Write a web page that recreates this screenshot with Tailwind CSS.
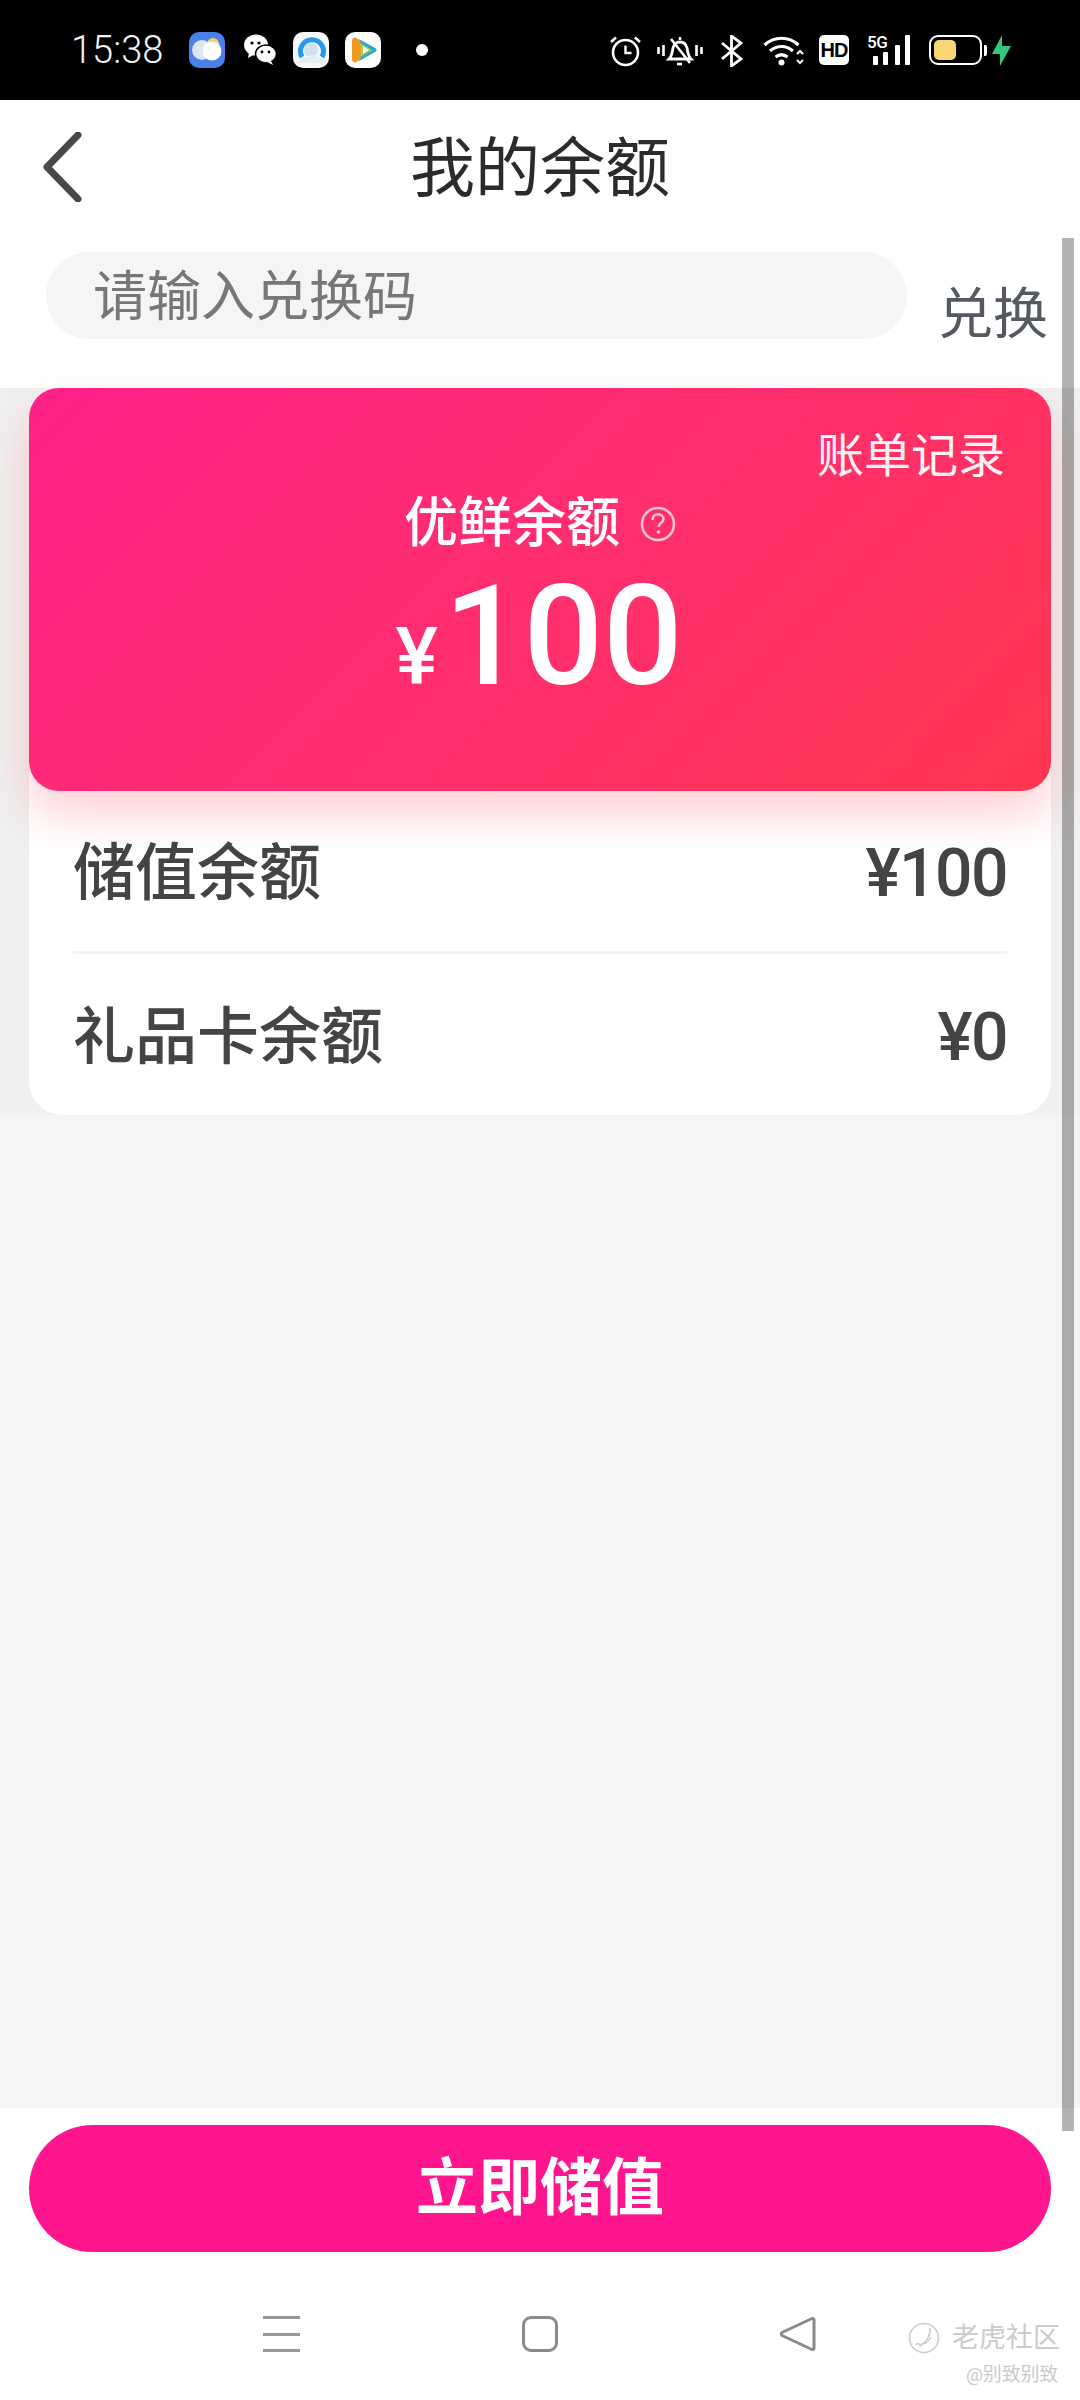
<!DOCTYPE html>
<html lang="zh">
<head>
<meta charset="utf-8">
<script src="https://cdn.jsdelivr.net/npm/@tailwindcss/browser@4"></script>
</head>
<body class="bg-white">
<div class="relative w-[1080px] h-[2400px] overflow-hidden flex flex-col bg-white font-['Roboto','Noto_Sans_CJK_SC',sans-serif]">

  <!-- status bar -->
  <div class="h-[100px] shrink-0 bg-black flex items-center text-white relative">
    <span class="ml-[71px] w-[112px] text-[38px] font-light leading-none text-[#f4f4f4]">15:38</span>
    <svg class="w-[36px] h-[36px] ml-[6px]" viewBox="0 0 36 36"><rect width="36" height="36" rx="10" fill="#4a80e8"/><circle cx="13" cy="18" r="10" fill="#dbe6f8"/><circle cx="24" cy="12" r="6" fill="#f4d468"/><circle cx="23" cy="19" r="9.500" fill="#fff"/></svg>
    <svg class="w-[34px] h-[32px] ml-[18px]" viewBox="0 0 34 32"><ellipse cx="13" cy="11" rx="12" ry="10.500" fill="#fff"/><path d="M6 18l-1 6 7-4z" fill="#fff"/><ellipse cx="23" cy="20" rx="10.500" ry="9" fill="#fff" stroke="#000" stroke-width="1.500"/><path d="M28 27l2 4-6-3z" fill="#fff"/><circle cx="9" cy="9" r="1.600"/><circle cx="16" cy="9" r="1.600"/><circle cx="19" cy="18" r="1.400"/><circle cx="26" cy="18" r="1.400"/></svg>
    <svg class="w-[36px] h-[36px] ml-[16px]" viewBox="0 0 36 36"><rect width="36" height="36" rx="10" fill="#f4f8fc"/><path d="M9 25a11.500 11.500 0 1 1 20 0" fill="none" stroke="#2a98ec" stroke-width="5"/><circle cx="18" cy="18" r="7" fill="#cfe0ee"/><path d="M4 31c3-7 8-6 11-6 3-4 9-3 10 1 3-1 7 0 8 5z" fill="#e4eef6"/></svg>
    <svg class="w-[36px] h-[36px] ml-[16px]" viewBox="0 0 36 36"><rect width="36" height="36" rx="10" fill="#fff"/><path d="M11 6l19 10c2 1 2 3 0 4L11 30c-2 1-4 0-4-3V9c0-3 2-4 4-3z" fill="#f09a22"/><path d="M14 7l16 9c2 1 2 3 0 4l-16 9c4-7 4-15 0-22z" fill="#33a6d8"/><path d="M15 11l12 7-12 7c1.500-4 1.500-10 0-14z" fill="#9bd84a"/><path d="M18 14l6 4-6 4z" fill="#fff"/></svg>
    <span class="ml-[35px] w-[12px] h-[12px] rounded-full bg-white"></span>

    <div class="absolute left-[610px] top-[35px] flex items-start">
      <svg class="w-[31px] h-[32px]" viewBox="0 0 31 32" fill="none" stroke="#fff" stroke-width="2.600"><circle cx="15.500" cy="17.500" r="12.500"/><path d="M15.500 10.500v7.500h6" stroke-width="2.400"/><path d="M1 7l5-4.500M30 7l-5-4.500"/></svg>
      <svg class="w-[46px] h-[32px] ml-[16px]" viewBox="0 0 46 32" fill="none" stroke="#fff"><path d="M1.500 12v7M6.500 10v11M39.500 10v11M44.500 12v7" stroke-width="2.600"/><path d="M12 24c3-3 3-6 4-11 1-4 4-6 7-6s6 2 7 6c1 5 1 8 4 11z" stroke-width="2.800"/><path d="M14 4l19 24" stroke-width="2.600"/><path d="M20 29h5" stroke-width="2.600"/><path d="M23 2v3" stroke-width="2.600"/></svg>
      <svg class="w-[24px] h-[32px] ml-[17px]" viewBox="0 0 24 32" fill="none" stroke="#fff" stroke-width="2.800"><path d="M2 8l19 16-9.500 7V1l9.500 7L2 24"/></svg>
      <svg class="w-[41px] h-[32px] ml-[19px]" viewBox="0 0 41 32" fill="none" stroke="#fff" stroke-width="3.200"><path d="M1.500 10c10-9 24-9 34 0"/><path d="M7 16c7-6 16-6 23 0"/><path d="M12.500 22c4-3 8-3 12 0"/><circle cx="18.500" cy="27.500" r="3" fill="#fff" stroke="none"/><path d="M34 19l3-3 3 3M34 25l3 3 3-3" stroke-width="2"/></svg>
      <div class="w-[30px] h-[30px] ml-[15px] bg-white rounded-[5px] flex items-center justify-center text-black font-['Liberation_Sans',sans-serif] font-bold text-[20px] leading-none tracking-[-1px]">HD</div>
      <div class="relative w-[44px] h-[32px] ml-[18px]">
        <span class="absolute left-0 top-[-1px] text-[17px] leading-[17px] tracking-[-0.5px] font-medium text-white">5G</span>
        <span class="absolute left-[6px] bottom-[2px] w-[5px] h-[9px] rounded-[1px] bg-white"></span>
        <span class="absolute left-[16px] bottom-[2px] w-[5px] h-[13px] rounded-[1px] bg-white"></span>
        <span class="absolute left-[28px] bottom-[2px] w-[5px] h-[20px] rounded-[1px] bg-white"></span>
        <span class="absolute left-[38px] bottom-[2px] w-[5px] h-[30px] rounded-[1px] bg-white"></span>
      </div>
      <div class="w-[53px] h-[30px] ml-[18px] rounded-[9px] border-[2.5px] border-white p-[3px]">
        <div class="w-[22px] h-full rounded-[5px] bg-[#fbd774]"></div>
      </div>
      <span class="w-[3px] h-[11px] mt-[10px] ml-[2px] rounded-r-[2px] bg-white"></span>
      <svg class="w-[20px] h-[31px] ml-[5px]" viewBox="0 0 20 31"><path d="M10 0v11h9L8 31V19H0z" fill="#34c57f"/></svg>
    </div>
  </div>

  <!-- header -->
  <div class="h-[134px] shrink-0 relative flex items-center justify-center">
    <svg class="absolute left-[42px] top-[32px] w-[40px] h-[70px]" viewBox="0 0 40 70" fill="none"><path d="M36 3L5 35l31 32" stroke="#484848" stroke-width="7" stroke-linecap="round" stroke-linejoin="round"/></svg>
    <h1 class="text-[65px] leading-none font-normal text-[#2b2b2b] mt-[4px]">我的余额</h1>
  </div>

  <!-- redeem row -->
  <div class="h-[154px] shrink-0 relative pl-[46px] pt-[18px] flex items-start">
    <div class="w-[861px] h-[87px] rounded-full bg-[#f5f5f5] pl-[47px] flex items-center text-[54px] leading-none text-[#777]"><span class="mt-[4px]">请输入兑换码</span></div>
    <span class="ml-[31px] mt-[35px] text-[55px] leading-none text-[#555a60]">兑换</span>
  </div>

  <!-- balances band -->
  <div class="shrink-0 bg-[#f0f0f0] px-[29px]">
    <div class="bg-white rounded-[34px] w-[1022px]">
      <div class="relative h-[403px] rounded-[30px] bg-linear-135 from-[#ff2088] to-[#ff3650] shadow-[0_24px_46px_rgba(255,60,80,0.24)] text-white flex flex-col items-center">
        <span class="absolute right-[46px] top-[44px] text-[47px] leading-[48px] text-[#fff3f5]">账单记录</span>
        <div class="flex items-center mt-[108px] ml-[0px]">
          <span class="text-[54px] leading-[56px] font-medium">优鲜余额</span>
          <svg class="w-[36px] h-[36px] ml-[20px]" viewBox="0 0 36 36" fill="none"><circle cx="18" cy="18" r="16" stroke="#ffc6d6" stroke-width="2.500"/><path d="M12.500 14c0-8 11-7 11-1 0 4-5 4-5 8" stroke="#ffc6d6" stroke-width="2.500"/><circle cx="18.500" cy="26" r="1.800" fill="#ffc6d6"/></svg>
        </div>
        <div class="flex items-baseline mt-[32px] ml-[-2px] font-medium">
          <span class="text-[80px] leading-[80px] mr-[6px]">¥</span>
          <span class="text-[140px] leading-[104px]">100</span>
        </div>
      </div>
      <div class="px-[44px]">
        <div class="h-[163px] flex items-center justify-between border-b-[3px] border-[#f3f3f3] text-[#444] pt-[6px]">
          <span class="text-[62px] leading-none font-medium">储值余额</span>
          <span class="text-[66px] leading-none font-medium tracking-[-1.5px]">¥100</span>
        </div>
        <div class="h-[161px] flex items-center justify-between text-[#444] pt-[6px]">
          <span class="text-[62px] leading-none font-medium">礼品卡余额</span>
          <span class="text-[66px] leading-none font-medium tracking-[-1.5px]">¥0</span>
        </div>
      </div>
    </div>
  </div>

  <div class="flex-1 bg-[#f5f5f5]"></div>

  <!-- bottom action -->
  <div class="h-[292px] shrink-0 bg-white px-[29px] pt-[17px]">
    <button class="w-[1022px] h-[127px] rounded-full bg-[#ff168f] text-white text-[62px] leading-none font-bold">立即储值</button>
    <div class="mt-[64px] relative h-[36px]">
      <div class="absolute left-[234px] top-0 w-[37px] h-[36px] flex flex-col justify-between">
        <span class="h-[3px] bg-[#999]"></span><span class="h-[3px] bg-[#999]"></span><span class="h-[3px] bg-[#999]"></span>
      </div>
      <div class="absolute left-[493px] top-0 w-[36px] h-[36px] rounded-[9px] border-[3px] border-[#8a8a8a]"></div>
      <svg class="absolute left-[750px] top-0 w-[37px] h-[36px]" viewBox="0 0 37 36" fill="none"><path d="M33 2.500a1.500 1.500 0 0 1 2 1.500v28a1.500 1.500 0 0 1-2 1.500L3 19.500a2 2 0 0 1 0-3z" stroke="#8a8a8a" stroke-width="3" stroke-linejoin="round"/></svg>
    </div>
  </div>

  <!-- scrollbar -->
  <div class="absolute left-[1062px] top-[238px] w-[12px] h-[1893px] bg-black/30"></div>

  <!-- watermark -->
  <div class="absolute left-[908px] top-[2322px] flex items-center text-[#c9cbce]">
    <svg class="w-[32px] h-[32px]" viewBox="0 0 32 32" fill="none" stroke="#c9cbce" stroke-width="1.500"><circle cx="16" cy="16" r="14.500"/><path d="M22 6c1 6-3 14-10 18 0-3-3-3-4-1M13 22c4 0 8-3 10-7" /></svg>
    <span class="ml-[12px] text-[27px] leading-none">老虎社区</span>
  </div>
  <div class="absolute left-[966px] top-[2365px] text-[19px] leading-none tracking-[-0.2px] text-[#c9cbce] whitespace-nowrap">@别致别致</div>
</div>
</body>
</html>
